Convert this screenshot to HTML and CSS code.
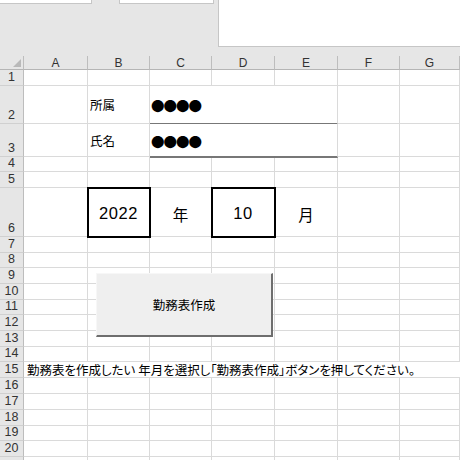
FILE: index.html
```html
<!DOCTYPE html>
<html lang="ja">
<head>
<meta charset="utf-8">
<link rel="stylesheet" href="styles.css">
</head>
<body>
<div class="top">
  <div class="box1"></div>
  <div class="box2"></div>
  <div class="panel"></div>
</div>
<div class="sheet">
  <div class="corner"><span class="tri"></span></div>
  <div class="ch">A</div><div class="ch">B</div><div class="ch">C</div><div class="ch">D</div><div class="ch">E</div><div class="ch">F</div><div class="ch">G</div>

  <div class="rh">1</div><div class="c"></div><div class="c"></div><div class="c"></div><div class="c"></div><div class="c"></div><div class="c"></div><div class="c"></div>

  <div class="rh">2</div><div class="c"></div><div class="c jp">所属</div><div class="c u dots">●●●●</div><div class="c"></div><div class="c"></div>

  <div class="rh">3</div><div class="c"></div><div class="c jp">氏名</div><div class="c u dots">●●●●</div><div class="c"></div><div class="c"></div>

  <div class="rh">4</div><div class="c"></div><div class="c"></div><div class="c"></div><div class="c"></div><div class="c"></div><div class="c"></div><div class="c"></div>

  <div class="rh">5</div><div class="c"></div><div class="c"></div><div class="c"></div><div class="c"></div><div class="c"></div><div class="c"></div><div class="c"></div>

  <div class="rh">6</div><div class="c"></div><div class="c box num">2022</div><div class="c big">年</div><div class="c box num">10</div><div class="c big">月</div><div class="c"></div><div class="c"></div>

  <div class="rh">7</div><div class="c"></div><div class="c"></div><div class="c"></div><div class="c"></div><div class="c"></div><div class="c"></div><div class="c"></div>

  <div class="rh">8</div><div class="c"></div><div class="c"></div><div class="c"></div><div class="c"></div><div class="c"></div><div class="c"></div><div class="c"></div>

  <div class="rh">9</div><div class="c"></div><div class="c"></div><div class="c"></div><div class="c"></div><div class="c"></div><div class="c"></div><div class="c"></div>

  <div class="rh">10</div><div class="c"></div><div class="c"></div><div class="c"></div><div class="c"></div><div class="c"></div><div class="c"></div><div class="c"></div>

  <div class="rh">11</div><div class="c"></div><div class="c"></div><div class="c"></div><div class="c"></div><div class="c"></div><div class="c"></div><div class="c"></div>

  <div class="rh">12</div><div class="c"></div><div class="c"></div><div class="c"></div><div class="c"></div><div class="c"></div><div class="c"></div><div class="c"></div>

  <div class="rh">13</div><div class="c"></div><div class="c"></div><div class="c"></div><div class="c"></div><div class="c"></div><div class="c"></div><div class="c"></div>

  <div class="rh">14</div><div class="c"></div><div class="c"></div><div class="c"></div><div class="c"></div><div class="c"></div><div class="c"></div><div class="c"></div>

  <div class="rh">15</div><div class="c msg">勤務表を作成したい 年月を選択し「勤務表作成」ボタンを押してください。</div>

  <div class="rh">16</div><div class="c"></div><div class="c"></div><div class="c"></div><div class="c"></div><div class="c"></div><div class="c"></div><div class="c"></div>

  <div class="rh">17</div><div class="c"></div><div class="c"></div><div class="c"></div><div class="c"></div><div class="c"></div><div class="c"></div><div class="c"></div>

  <div class="rh">18</div><div class="c"></div><div class="c"></div><div class="c"></div><div class="c"></div><div class="c"></div><div class="c"></div><div class="c"></div>

  <div class="rh">19</div><div class="c"></div><div class="c"></div><div class="c"></div><div class="c"></div><div class="c"></div><div class="c"></div><div class="c"></div>

  <div class="rh">20</div><div class="c"></div><div class="c"></div><div class="c"></div><div class="c"></div><div class="c"></div><div class="c"></div><div class="c"></div>

  <div class="rh"></div><div class="c"></div><div class="c"></div><div class="c"></div><div class="c"></div><div class="c"></div><div class="c"></div><div class="c"></div>

  <div class="btn">勤務表作成</div>
</div>
</body>
</html>
```

FILE: styles.css
```css
* { box-sizing: border-box; }
html, body {
  margin: 0;
  padding: 0;
  width: 460px;
  height: 460px;
  overflow: hidden;
  background: #ffffff;
  font-family: "Noto Sans CJK JP", "Liberation Sans", sans-serif;
  color: #000;
}
.top {
  height: 56px;
  background: #e6e6e6;
  display: flex;
  align-items: flex-start;
}
.box1 {
  width: 92px;
  height: 4px;
  background: #fff;
  border-right: 1px solid #c6c6c6;
  border-bottom: 1px solid #c6c6c6;
}
.box2 {
  width: 95px;
  height: 4px;
  margin-left: 27px;
  background: #fff;
  border: 1px solid #c6c6c6;
  border-top: none;
}
.panel {
  width: 242px;
  height: 47px;
  margin-left: 4px;
  background: #fff;
  border-left: 1px solid #c6c6c6;
  border-bottom: 1px solid #c6c6c6;
}
.sheet {
  position: relative;
  display: grid;
  grid-template-columns: 24px 64px 62px 62px 63px 63px 62px 60px;
  grid-template-rows: 14px 16px 38px 33px 15px 16px 49px 16px 15px 16px 16px 15px 16px 16px 15px 16px 16px 16px 16px 15px 16px 10px;
}
.corner {
  background: #e6e6e6;
  border-right: 1px solid #bdbdbd;
  border-bottom: 1px solid #b5b5b5;
  position: relative;
}
.tri {
  position: absolute;
  right: 2px;
  bottom: 2px;
  width: 0;
  height: 0;
  border-left: 8px solid transparent;
  border-bottom: 8px solid #b9b9b9;
}
.ch {
  background: #e6e6e6;
  border-right: 1px solid #bdbdbd;
  border-bottom: 1px solid #b5b5b5;
  font-family: "Liberation Sans", sans-serif;
  font-size: 12px;
  line-height: 13px;
  text-align: center;
  color: #333;
  padding-top: 1px;
}
.rh {
  background: #e6e6e6;
  border-right: 1px solid #bdbdbd;
  border-bottom: 1px solid #d0d0d0;
  font-family: "Liberation Sans", sans-serif;
  font-size: 12.5px;
  line-height: 13px;
  color: #333;
  display: flex;
  align-items: flex-end;
  justify-content: center;
  padding-bottom: 1px;
}
.c {
  background: #fff;
  border-right: 1px solid #dadada;
  border-bottom: 1px solid #dadada;
  display: flex;
  align-items: center;
  min-width: 0;
}
.jp {
  font-size: 12.5px;
  padding-left: 2px;
}
.u {
  grid-column: span 3;
  border-bottom: 2px solid #777;
  margin-bottom: -1px;
  position: relative;
  z-index: 1;
}
.dots {
  font-size: 13.5px;
  letter-spacing: -1px;
  padding-left: 1px;
  padding-top: 1px;
}
.box {
  outline: 2px solid #000;
  outline-offset: -1px;
  position: relative;
  z-index: 2;
  justify-content: center;
}
.num {
  font-family: "Liberation Sans", sans-serif;
  font-size: 16.5px;
  letter-spacing: 0.6px;
  padding-top: 3px;
}
.big {
  justify-content: center;
  font-size: 15.5px;
  padding-top: 3px;
}
.msg {
  grid-column: span 7;
  border-right: none;
  font-size: 12.5px;
  font-feature-settings: "palt";
  white-space: nowrap;
  padding-left: 3px;
  overflow: visible;
}
.btn {
  position: absolute;
  left: 96px;
  top: 217px;
  width: 177px;
  height: 64px;
  background: #efefef;
  border-top: 1px solid #f7f7f7;
  border-left: 1px solid #f7f7f7;
  border-right: 2px solid #6e6e6e;
  border-bottom: 2px solid #6e6e6e;
  display: flex;
  align-items: center;
  justify-content: center;
  font-size: 12.5px;
  z-index: 3;
}
```
